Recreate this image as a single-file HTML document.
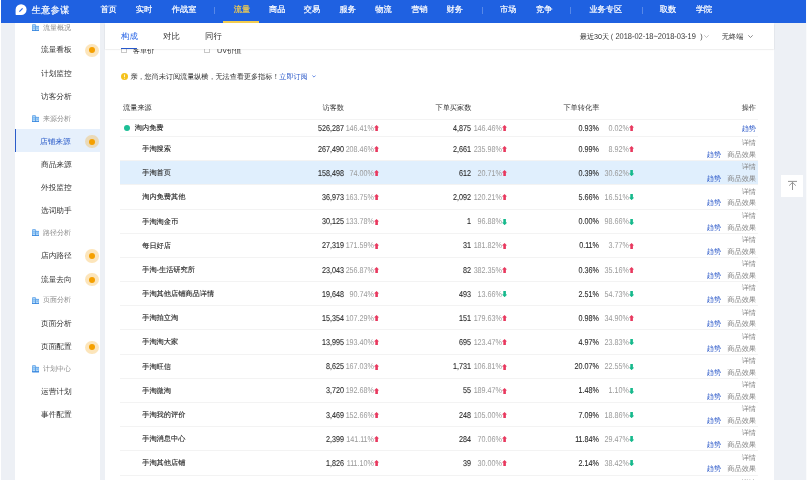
<!DOCTYPE html><html><head><meta charset="utf-8"><style>
*{box-sizing:border-box;margin:0;padding:0}
html,body{width:807px;height:480px;overflow:hidden}
body{position:relative;background:#edf0f5;font-family:"Liberation Sans",sans-serif;color:#333;text-rendering:geometricPrecision}
.abs{position:absolute;white-space:nowrap}
#wrap{position:absolute;left:0;top:0;width:807px;height:480px;will-change:transform}
#hdr{position:absolute;left:1px;top:0;width:804.8px;height:22.8px;background:#1f61e1;z-index:5}
#hdr .n{position:absolute;top:0;height:22.8px;line-height:20.6px;font-size:8.2px;color:#fff;white-space:nowrap;-webkit-text-stroke:0.2px #fff}
#hdr .n.on{color:#f3cd4e;-webkit-text-stroke:0.2px #f3cd4e}
#hdr .sep{position:absolute;top:7px;width:1px;height:7px;background:rgba(255,255,255,.25)}
#hdr .ul{position:absolute;left:222.1px;top:20.9px;width:36.3px;height:2px;background:#f3cd4e}
#logo{position:absolute;left:30.8px;top:0;line-height:20.2px;font-size:9px;letter-spacing:0.45px;color:#fff;-webkit-text-stroke:0.2px #fff}
#lstrip{position:absolute;left:0;top:0;width:1px;height:480px;background:#fff}
#side{position:absolute;left:14.6px;top:0;width:85.2px;height:480px;background:#fff}
#side .it{position:absolute;left:0;width:85.2px;height:23px;line-height:23px;font-size:8px;color:#333;padding-left:26.6px}
#side .it span{display:inline-block;position:relative;top:-0.6px;transform:scale(0.96);transform-origin:0 50%}
#side .sec{position:absolute;left:0;width:85.2px;height:20px;line-height:21px;font-size:7px;color:#8c8c8c;padding-left:28.3px}
#side .sec svg{position:absolute;left:17.1px;top:6.2px;width:7.4px;height:7.2px}
#side .act{background:#e6f0fc;color:#2b5cc9;border-left:1.6px solid #2b5cc9;padding-left:24.4px;margin-top:-0.8px}
#side .act span{top:0.2px}
.dot{position:absolute;width:13.4px;height:13.4px;border-radius:50%;background:rgba(245,170,30,.3)}
.dot:after{content:"";position:absolute;left:3.5px;top:3.5px;width:6.4px;height:6.4px;border-radius:50%;background:#f5a000}
#main{position:absolute;left:104.5px;top:0;width:669.5px;height:480px;background:#fff}
#tabs{position:absolute;left:104.5px;top:22.8px;width:669.5px;height:26.3px;background:#fff;z-index:3;box-shadow:0 0.5px 1.5px rgba(0,0,0,.16)}
.tab{position:absolute;top:0;line-height:27.5px;font-size:7.7px;color:#333}
.tb{font-size:8px}.tb span{display:inline-block;transform:scale(1.05);transform-origin:0 50%}
.t{position:absolute;font-size:7.2px;white-space:nowrap}
.nm{color:#2a2a2a;-webkit-text-stroke:0.12px #2a2a2a}
.nv{color:#2a2a2a;-webkit-text-stroke:0.08px #2a2a2a;transform:scaleY(1.18)}
.pc{transform:scaleY(1.18)}
.row{position:absolute;left:120px;width:638px;border-bottom:1px solid #f3f3f3}
.hl{background:#e0effd}
.ar{position:absolute;width:5.2px;height:6.2px}
.pc{color:#999}
.lk{color:#2856c8}
.gr{color:#858585}
</style></head><body>
<div id="wrap">
<div id="lstrip"></div>
<div id="hdr">
<svg class="abs" style="left:13.6px;top:3.8px" width="12" height="11.5" viewBox="0 0 12 11.5"><path d="M1.2 10.9 Q0.6 10.9 0.6 10.2 V5.6 A5.5 5.4 0 1 1 6.1 11 Z" fill="#fff"/><path d="M4.4 7.6 L7.6 4.3" stroke="#2462e6" stroke-width="1.1" fill="none"/></svg>
<div id="logo">生意参谋</div>
<div class="n" style="left:99.4px">首页</div>
<div class="n" style="left:134.8px">实时</div>
<div class="n" style="left:170.8px">作战室</div>
<div class="sep" style="left:213.0px"></div>
<div class="n on" style="left:232.7px">流量</div>
<div class="n" style="left:268.0px">商品</div>
<div class="n" style="left:302.8px">交易</div>
<div class="n" style="left:338.5px">服务</div>
<div class="n" style="left:374.2px">物流</div>
<div class="n" style="left:410.4px">营销</div>
<div class="n" style="left:445.5px">财务</div>
<div class="sep" style="left:481.2px"></div>
<div class="n" style="left:499.0px">市场</div>
<div class="n" style="left:535.1px">竞争</div>
<div class="sep" style="left:569.4px"></div>
<div class="n" style="left:588.4px">业务专区</div>
<div class="sep" style="left:640.5px"></div>
<div class="n" style="left:658.8px">取数</div>
<div class="n" style="left:694.9px">学院</div>
<div class="ul"></div>
</div>
<div id="side">
<div class="sec" style="top:18.10px"><svg viewBox="0 0 7.4 7.2"><path d="M0.4 7 V1.3 Q0.4 0.4 1.3 0.4 H2.7 Q3.6 0.4 3.6 1.3 V7 Z" fill="#b9dcf8" stroke="#4b97e6" stroke-width="0.8"/><path d="M3.6 7 V2.4 H7 V7 Z" fill="#b9dcf8" stroke="#4b97e6" stroke-width="0.8"/><rect x="0" y="6.3" width="7.4" height="0.9" fill="#2f80dc"/><rect x="1.3" y="1.8" width="1.4" height="1" fill="#5aa5ec"/><rect x="1.3" y="3.6" width="1.4" height="1" fill="#5aa5ec"/><rect x="4.6" y="3.6" width="1.4" height="1" fill="#5aa5ec"/></svg>流量概况</div>
<div class="it" style="top:38.70px"><span>流量看板</span></div>
<div class="dot" style="left:70.80px;top:43.50px"></div>
<div class="it" style="top:62.25px"><span>计划监控</span></div>
<div class="it" style="top:85.20px"><span>访客分析</span></div>
<div class="sec" style="top:108.75px"><svg viewBox="0 0 7.4 7.2"><path d="M0.4 7 V1.3 Q0.4 0.4 1.3 0.4 H2.7 Q3.6 0.4 3.6 1.3 V7 Z" fill="#b9dcf8" stroke="#4b97e6" stroke-width="0.8"/><path d="M3.6 7 V2.4 H7 V7 Z" fill="#b9dcf8" stroke="#4b97e6" stroke-width="0.8"/><rect x="0" y="6.3" width="7.4" height="0.9" fill="#2f80dc"/><rect x="1.3" y="1.8" width="1.4" height="1" fill="#5aa5ec"/><rect x="1.3" y="3.6" width="1.4" height="1" fill="#5aa5ec"/><rect x="4.6" y="3.6" width="1.4" height="1" fill="#5aa5ec"/></svg>来源分析</div>
<div class="it act" style="top:130.20px"><span>店铺来源</span></div>
<div class="dot" style="left:70.80px;top:135.00px"></div>
<div class="it" style="top:153.50px"><span>商品来源</span></div>
<div class="it" style="top:177.00px"><span>外投监控</span></div>
<div class="it" style="top:200.00px"><span>选词助手</span></div>
<div class="sec" style="top:222.90px"><svg viewBox="0 0 7.4 7.2"><path d="M0.4 7 V1.3 Q0.4 0.4 1.3 0.4 H2.7 Q3.6 0.4 3.6 1.3 V7 Z" fill="#b9dcf8" stroke="#4b97e6" stroke-width="0.8"/><path d="M3.6 7 V2.4 H7 V7 Z" fill="#b9dcf8" stroke="#4b97e6" stroke-width="0.8"/><rect x="0" y="6.3" width="7.4" height="0.9" fill="#2f80dc"/><rect x="1.3" y="1.8" width="1.4" height="1" fill="#5aa5ec"/><rect x="1.3" y="3.6" width="1.4" height="1" fill="#5aa5ec"/><rect x="4.6" y="3.6" width="1.4" height="1" fill="#5aa5ec"/></svg>路径分析</div>
<div class="it" style="top:244.50px"><span>店内路径</span></div>
<div class="dot" style="left:70.80px;top:249.30px"></div>
<div class="it" style="top:268.30px"><span>流量去向</span></div>
<div class="dot" style="left:70.80px;top:273.10px"></div>
<div class="sec" style="top:290.40px"><svg viewBox="0 0 7.4 7.2"><path d="M0.4 7 V1.3 Q0.4 0.4 1.3 0.4 H2.7 Q3.6 0.4 3.6 1.3 V7 Z" fill="#b9dcf8" stroke="#4b97e6" stroke-width="0.8"/><path d="M3.6 7 V2.4 H7 V7 Z" fill="#b9dcf8" stroke="#4b97e6" stroke-width="0.8"/><rect x="0" y="6.3" width="7.4" height="0.9" fill="#2f80dc"/><rect x="1.3" y="1.8" width="1.4" height="1" fill="#5aa5ec"/><rect x="1.3" y="3.6" width="1.4" height="1" fill="#5aa5ec"/><rect x="4.6" y="3.6" width="1.4" height="1" fill="#5aa5ec"/></svg>页面分析</div>
<div class="it" style="top:312.25px"><span>页面分析</span></div>
<div class="it" style="top:335.80px"><span>页面配置</span></div>
<div class="dot" style="left:70.80px;top:340.60px"></div>
<div class="sec" style="top:359.30px"><svg viewBox="0 0 7.4 7.2"><path d="M0.4 7 V1.3 Q0.4 0.4 1.3 0.4 H2.7 Q3.6 0.4 3.6 1.3 V7 Z" fill="#b9dcf8" stroke="#4b97e6" stroke-width="0.8"/><path d="M3.6 7 V2.4 H7 V7 Z" fill="#b9dcf8" stroke="#4b97e6" stroke-width="0.8"/><rect x="0" y="6.3" width="7.4" height="0.9" fill="#2f80dc"/><rect x="1.3" y="1.8" width="1.4" height="1" fill="#5aa5ec"/><rect x="1.3" y="3.6" width="1.4" height="1" fill="#5aa5ec"/><rect x="4.6" y="3.6" width="1.4" height="1" fill="#5aa5ec"/></svg>计划中心</div>
<div class="it" style="top:380.80px"><span>运营计划</span></div>
<div class="it" style="top:403.70px"><span>事件配置</span></div>
</div>
<div id="main"></div>
<div id="tabs">
<div class="tab tb" style="left:16.3px;color:#2462e6"><span>构成</span></div>
<div class="tab tb" style="left:58px"><span>对比</span></div>
<div class="tab tb" style="left:100.1px"><span>同行</span></div>
<div class="abs" style="left:16.6px;top:25.1px;width:15.8px;height:1.2px;background:#2758cc"></div>
<div class="tab" id="date" style="left:475.2px;font-size:7.2px">最近30天</div>
<div class="tab" style="left:506.3px;font-size:7.2px">(</div>
<div class="tab" id="dd" style="left:510.9px;font-size:7.45px"><span style="display:inline-block;transform:scaleY(1.12)">2018-02-18~2018-03-19</span></div>
<div class="tab" style="left:595.8px;font-size:7.2px">)</div>
<svg class="abs" style="left:599.8px;top:12.4px" width="5" height="3" viewBox="0 0 5 3"><path d="M0.3 0.3 L2.5 2.5 L4.7 0.3" stroke="#b5b5b5" stroke-width="0.85" fill="none"/></svg>
<div class="tab" style="left:617.3px;font-size:7.2px">无终端</div>
<svg class="abs" style="left:643.4px;top:12.4px" width="5" height="3" viewBox="0 0 5 3"><path d="M0.3 0.3 L2.5 2.5 L4.7 0.3" stroke="#777" stroke-width="0.85" fill="none"/></svg>
</div>
<div class="t" style="left:121px;top:47.2px;width:6.3px;height:6.3px;border:1px solid #c8c8c8;background:#fff"></div>
<div class="t" style="left:132.7px;top:46px;font-size:7.2px">客单价</div>
<div class="t" style="left:204px;top:47.2px;width:6.3px;height:6.3px;border:1px solid #c8c8c8;background:#fff"></div>
<div class="t" style="left:217px;top:46px;font-size:7.2px">UV价值</div>
<svg class="abs" style="left:120.8px;top:72.6px" width="7" height="7" viewBox="0 0 7 7"><circle cx="3.5" cy="3.5" r="3.5" fill="#f5c21b"/><path d="M3.5 1.5 V4.2 M3.5 4.9 V5.6" stroke="#fff" stroke-width="0.8"/></svg>
<div class="t" style="left:130.4px;top:70.5px;line-height:11px;font-size:7.2px;letter-spacing:-0.095px">亲，您尚未订阅流量纵横，无法查看更多指标！<span class="lk">立即订阅</span></div>
<svg class="abs" style="left:311.5px;top:75.3px" width="4" height="3" viewBox="0 0 4 3"><path d="M0.4 0.5 L2 2.1 L3.6 0.5" stroke="#2b5fd9" stroke-width="0.7" fill="none"/></svg>
<div class="row" style="top:95.5px;height:24px"></div>
<div class="t" style="left:123px;top:101.8px;line-height:11px">流量来源</div>
<div class="t" style="right:463.0px;top:101.8px;line-height:11px">访客数</div>
<div class="t" style="right:335.6px;top:101.8px;line-height:11px">下单买家数</div>
<div class="t" style="left:563.4px;top:101.8px;line-height:11px">下单转化率</div>
<div class="t" style="right:51.0px;top:101.8px;line-height:11px">操作</div>
<div class="row" style="top:119.50px;height:17.50px"></div>
<div class="abs" style="left:123.6px;top:124.75px;width:6.7px;height:6.7px;border-radius:50%;background:#1dbf96"></div>
<div class="t nm" style="left:134.8px;top:122.15px;line-height:11px">淘内免费</div>
<div class="t nv" style="right:463.0px;top:122.75px;line-height:11px">526,287</div>
<div class="t pc" style="right:433.0px;top:122.75px;line-height:11px">146.41%</div>
<svg class="ar" style="left:374.20px;top:125px" viewBox="0 0 5.2 6.2"><path d="M2.6 0 L5.2 2.6 H3.9 V6.2 H1.3 V2.6 H0 Z" fill="#e8385e"/></svg>
<div class="t nv" style="right:336.0px;top:122.75px;line-height:11px">4,875</div>
<div class="t pc" style="right:305.0px;top:122.75px;line-height:11px">146.46%</div>
<svg class="ar" style="left:502.20px;top:125px" viewBox="0 0 5.2 6.2"><path d="M2.6 0 L5.2 2.6 H3.9 V6.2 H1.3 V2.6 H0 Z" fill="#e8385e"/></svg>
<div class="t nv" style="right:208.0px;top:122.75px;line-height:11px">0.93%</div>
<div class="t pc" style="right:178.0px;top:122.75px;line-height:11px">0.02%</div>
<svg class="ar" style="left:629.20px;top:125px" viewBox="0 0 5.2 6.2"><path d="M2.6 0 L5.2 2.6 H3.9 V6.2 H1.3 V2.6 H0 Z" fill="#e8385e"/></svg>
<div class="t lk" style="right:51.0px;top:122.75px;line-height:11px">趋势</div>
<div class="row" style="top:137.00px;height:24.20px"></div>
<div class="t nm" style="left:142.2px;top:143.00px;line-height:11px">手淘搜索</div>
<div class="t nv" style="right:463.0px;top:143.60px;line-height:11px">267,490</div>
<div class="t pc" style="right:433.0px;top:143.60px;line-height:11px">208.46%</div>
<svg class="ar" style="left:374.20px;top:146px" viewBox="0 0 5.2 6.2"><path d="M2.6 0 L5.2 2.6 H3.9 V6.2 H1.3 V2.6 H0 Z" fill="#e8385e"/></svg>
<div class="t nv" style="right:336.0px;top:143.60px;line-height:11px">2,661</div>
<div class="t pc" style="right:305.0px;top:143.60px;line-height:11px">235.98%</div>
<svg class="ar" style="left:502.20px;top:146px" viewBox="0 0 5.2 6.2"><path d="M2.6 0 L5.2 2.6 H3.9 V6.2 H1.3 V2.6 H0 Z" fill="#e8385e"/></svg>
<div class="t nv" style="right:208.0px;top:143.60px;line-height:11px">0.99%</div>
<div class="t pc" style="right:178.0px;top:143.60px;line-height:11px">8.92%</div>
<svg class="ar" style="left:629.20px;top:146px" viewBox="0 0 5.2 6.2"><path d="M2.6 0 L5.2 2.6 H3.9 V6.2 H1.3 V2.6 H0 Z" fill="#e8385e"/></svg>
<div class="t gr" style="right:51.0px;top:137.30px;line-height:11px">详情</div>
<div class="t" style="right:51.0px;top:149.10px;line-height:11px"><span class="lk">趋势</span><span class="gr" style="margin-left:6.2px">商品效果</span></div>
<div class="row hl" style="top:161.20px;height:24.18px"></div>
<div class="t nm" style="left:142.2px;top:167.19px;line-height:11px">手淘首页</div>
<div class="t nv" style="right:463.0px;top:167.79px;line-height:11px">158,498</div>
<div class="t pc" style="right:433.0px;top:167.79px;line-height:11px">74.00%</div>
<svg class="ar" style="left:374.20px;top:170px" viewBox="0 0 5.2 6.2"><path d="M2.6 0 L5.2 2.6 H3.9 V6.2 H1.3 V2.6 H0 Z" fill="#e8385e"/></svg>
<div class="t nv" style="right:336.0px;top:167.79px;line-height:11px">612</div>
<div class="t pc" style="right:305.0px;top:167.79px;line-height:11px">20.71%</div>
<svg class="ar" style="left:502.20px;top:170px" viewBox="0 0 5.2 6.2"><path d="M2.6 0 L5.2 2.6 H3.9 V6.2 H1.3 V2.6 H0 Z" fill="#e8385e"/></svg>
<div class="t nv" style="right:208.0px;top:167.79px;line-height:11px">0.39%</div>
<div class="t pc" style="right:178.0px;top:167.79px;line-height:11px">30.62%</div>
<svg class="ar" style="left:629.20px;top:170px" viewBox="0 0 5.2 6.2"><path d="M2.6 6.2 L5.2 3.6 H3.9 V0 H1.3 V3.6 H0 Z" fill="#16b98c"/></svg>
<div class="t gr" style="right:51.0px;top:161.49px;line-height:11px">详情</div>
<div class="t" style="right:51.0px;top:173.29px;line-height:11px"><span class="lk">趋势</span><span class="gr" style="margin-left:6.2px">商品效果</span></div>
<div class="row" style="top:185.38px;height:24.18px"></div>
<div class="t nm" style="left:142.2px;top:191.37px;line-height:11px">淘内免费其他</div>
<div class="t nv" style="right:463.0px;top:191.97px;line-height:11px">36,973</div>
<div class="t pc" style="right:433.0px;top:191.97px;line-height:11px">163.75%</div>
<svg class="ar" style="left:374.20px;top:194px" viewBox="0 0 5.2 6.2"><path d="M2.6 0 L5.2 2.6 H3.9 V6.2 H1.3 V2.6 H0 Z" fill="#e8385e"/></svg>
<div class="t nv" style="right:336.0px;top:191.97px;line-height:11px">2,092</div>
<div class="t pc" style="right:305.0px;top:191.97px;line-height:11px">120.21%</div>
<svg class="ar" style="left:502.20px;top:194px" viewBox="0 0 5.2 6.2"><path d="M2.6 0 L5.2 2.6 H3.9 V6.2 H1.3 V2.6 H0 Z" fill="#e8385e"/></svg>
<div class="t nv" style="right:208.0px;top:191.97px;line-height:11px">5.66%</div>
<div class="t pc" style="right:178.0px;top:191.97px;line-height:11px">16.51%</div>
<svg class="ar" style="left:629.20px;top:194px" viewBox="0 0 5.2 6.2"><path d="M2.6 6.2 L5.2 3.6 H3.9 V0 H1.3 V3.6 H0 Z" fill="#16b98c"/></svg>
<div class="t gr" style="right:51.0px;top:185.67px;line-height:11px">详情</div>
<div class="t" style="right:51.0px;top:197.47px;line-height:11px"><span class="lk">趋势</span><span class="gr" style="margin-left:6.2px">商品效果</span></div>
<div class="row" style="top:209.56px;height:24.18px"></div>
<div class="t nm" style="left:142.2px;top:215.55px;line-height:11px">手淘淘金币</div>
<div class="t nv" style="right:463.0px;top:216.15px;line-height:11px">30,125</div>
<div class="t pc" style="right:433.0px;top:216.15px;line-height:11px">133.78%</div>
<svg class="ar" style="left:374.20px;top:219px" viewBox="0 0 5.2 6.2"><path d="M2.6 0 L5.2 2.6 H3.9 V6.2 H1.3 V2.6 H0 Z" fill="#e8385e"/></svg>
<div class="t nv" style="right:336.0px;top:216.15px;line-height:11px">1</div>
<div class="t pc" style="right:305.0px;top:216.15px;line-height:11px">96.88%</div>
<svg class="ar" style="left:502.20px;top:219px" viewBox="0 0 5.2 6.2"><path d="M2.6 6.2 L5.2 3.6 H3.9 V0 H1.3 V3.6 H0 Z" fill="#16b98c"/></svg>
<div class="t nv" style="right:208.0px;top:216.15px;line-height:11px">0.00%</div>
<div class="t pc" style="right:178.0px;top:216.15px;line-height:11px">98.66%</div>
<svg class="ar" style="left:629.20px;top:219px" viewBox="0 0 5.2 6.2"><path d="M2.6 6.2 L5.2 3.6 H3.9 V0 H1.3 V3.6 H0 Z" fill="#16b98c"/></svg>
<div class="t gr" style="right:51.0px;top:209.85px;line-height:11px">详情</div>
<div class="t" style="right:51.0px;top:221.65px;line-height:11px"><span class="lk">趋势</span><span class="gr" style="margin-left:6.2px">商品效果</span></div>
<div class="row" style="top:233.74px;height:24.18px"></div>
<div class="t nm" style="left:142.2px;top:239.73px;line-height:11px">每日好店</div>
<div class="t nv" style="right:463.0px;top:240.33px;line-height:11px">27,319</div>
<div class="t pc" style="right:433.0px;top:240.33px;line-height:11px">171.59%</div>
<svg class="ar" style="left:374.20px;top:243px" viewBox="0 0 5.2 6.2"><path d="M2.6 0 L5.2 2.6 H3.9 V6.2 H1.3 V2.6 H0 Z" fill="#e8385e"/></svg>
<div class="t nv" style="right:336.0px;top:240.33px;line-height:11px">31</div>
<div class="t pc" style="right:305.0px;top:240.33px;line-height:11px">181.82%</div>
<svg class="ar" style="left:502.20px;top:243px" viewBox="0 0 5.2 6.2"><path d="M2.6 0 L5.2 2.6 H3.9 V6.2 H1.3 V2.6 H0 Z" fill="#e8385e"/></svg>
<div class="t nv" style="right:208.0px;top:240.33px;line-height:11px">0.11%</div>
<div class="t pc" style="right:178.0px;top:240.33px;line-height:11px">3.77%</div>
<svg class="ar" style="left:629.20px;top:243px" viewBox="0 0 5.2 6.2"><path d="M2.6 0 L5.2 2.6 H3.9 V6.2 H1.3 V2.6 H0 Z" fill="#e8385e"/></svg>
<div class="t gr" style="right:51.0px;top:234.03px;line-height:11px">详情</div>
<div class="t" style="right:51.0px;top:245.83px;line-height:11px"><span class="lk">趋势</span><span class="gr" style="margin-left:6.2px">商品效果</span></div>
<div class="row" style="top:257.92px;height:24.18px"></div>
<div class="t nm" style="left:142.2px;top:263.91px;line-height:11px">手淘-生活研究所</div>
<div class="t nv" style="right:463.0px;top:264.51px;line-height:11px">23,043</div>
<div class="t pc" style="right:433.0px;top:264.51px;line-height:11px">256.87%</div>
<svg class="ar" style="left:374.20px;top:267px" viewBox="0 0 5.2 6.2"><path d="M2.6 0 L5.2 2.6 H3.9 V6.2 H1.3 V2.6 H0 Z" fill="#e8385e"/></svg>
<div class="t nv" style="right:336.0px;top:264.51px;line-height:11px">82</div>
<div class="t pc" style="right:305.0px;top:264.51px;line-height:11px">382.35%</div>
<svg class="ar" style="left:502.20px;top:267px" viewBox="0 0 5.2 6.2"><path d="M2.6 0 L5.2 2.6 H3.9 V6.2 H1.3 V2.6 H0 Z" fill="#e8385e"/></svg>
<div class="t nv" style="right:208.0px;top:264.51px;line-height:11px">0.36%</div>
<div class="t pc" style="right:178.0px;top:264.51px;line-height:11px">35.16%</div>
<svg class="ar" style="left:629.20px;top:267px" viewBox="0 0 5.2 6.2"><path d="M2.6 0 L5.2 2.6 H3.9 V6.2 H1.3 V2.6 H0 Z" fill="#e8385e"/></svg>
<div class="t gr" style="right:51.0px;top:258.21px;line-height:11px">详情</div>
<div class="t" style="right:51.0px;top:270.01px;line-height:11px"><span class="lk">趋势</span><span class="gr" style="margin-left:6.2px">商品效果</span></div>
<div class="row" style="top:282.10px;height:24.18px"></div>
<div class="t nm" style="left:142.2px;top:288.09px;line-height:11px">手淘其他店铺商品详情</div>
<div class="t nv" style="right:463.0px;top:288.69px;line-height:11px">19,648</div>
<div class="t pc" style="right:433.0px;top:288.69px;line-height:11px">90.74%</div>
<svg class="ar" style="left:374.20px;top:291px" viewBox="0 0 5.2 6.2"><path d="M2.6 0 L5.2 2.6 H3.9 V6.2 H1.3 V2.6 H0 Z" fill="#e8385e"/></svg>
<div class="t nv" style="right:336.0px;top:288.69px;line-height:11px">493</div>
<div class="t pc" style="right:305.0px;top:288.69px;line-height:11px">13.66%</div>
<svg class="ar" style="left:502.20px;top:291px" viewBox="0 0 5.2 6.2"><path d="M2.6 6.2 L5.2 3.6 H3.9 V0 H1.3 V3.6 H0 Z" fill="#16b98c"/></svg>
<div class="t nv" style="right:208.0px;top:288.69px;line-height:11px">2.51%</div>
<div class="t pc" style="right:178.0px;top:288.69px;line-height:11px">54.73%</div>
<svg class="ar" style="left:629.20px;top:291px" viewBox="0 0 5.2 6.2"><path d="M2.6 6.2 L5.2 3.6 H3.9 V0 H1.3 V3.6 H0 Z" fill="#16b98c"/></svg>
<div class="t gr" style="right:51.0px;top:282.39px;line-height:11px">详情</div>
<div class="t" style="right:51.0px;top:294.19px;line-height:11px"><span class="lk">趋势</span><span class="gr" style="margin-left:6.2px">商品效果</span></div>
<div class="row" style="top:306.28px;height:24.18px"></div>
<div class="t nm" style="left:142.2px;top:312.27px;line-height:11px">手淘拍立淘</div>
<div class="t nv" style="right:463.0px;top:312.87px;line-height:11px">15,354</div>
<div class="t pc" style="right:433.0px;top:312.87px;line-height:11px">107.29%</div>
<svg class="ar" style="left:374.20px;top:315px" viewBox="0 0 5.2 6.2"><path d="M2.6 0 L5.2 2.6 H3.9 V6.2 H1.3 V2.6 H0 Z" fill="#e8385e"/></svg>
<div class="t nv" style="right:336.0px;top:312.87px;line-height:11px">151</div>
<div class="t pc" style="right:305.0px;top:312.87px;line-height:11px">179.63%</div>
<svg class="ar" style="left:502.20px;top:315px" viewBox="0 0 5.2 6.2"><path d="M2.6 0 L5.2 2.6 H3.9 V6.2 H1.3 V2.6 H0 Z" fill="#e8385e"/></svg>
<div class="t nv" style="right:208.0px;top:312.87px;line-height:11px">0.98%</div>
<div class="t pc" style="right:178.0px;top:312.87px;line-height:11px">34.90%</div>
<svg class="ar" style="left:629.20px;top:315px" viewBox="0 0 5.2 6.2"><path d="M2.6 0 L5.2 2.6 H3.9 V6.2 H1.3 V2.6 H0 Z" fill="#e8385e"/></svg>
<div class="t gr" style="right:51.0px;top:306.57px;line-height:11px">详情</div>
<div class="t" style="right:51.0px;top:318.37px;line-height:11px"><span class="lk">趋势</span><span class="gr" style="margin-left:6.2px">商品效果</span></div>
<div class="row" style="top:330.46px;height:24.18px"></div>
<div class="t nm" style="left:142.2px;top:336.45px;line-height:11px">手淘淘大家</div>
<div class="t nv" style="right:463.0px;top:337.05px;line-height:11px">13,995</div>
<div class="t pc" style="right:433.0px;top:337.05px;line-height:11px">193.40%</div>
<svg class="ar" style="left:374.20px;top:339px" viewBox="0 0 5.2 6.2"><path d="M2.6 0 L5.2 2.6 H3.9 V6.2 H1.3 V2.6 H0 Z" fill="#e8385e"/></svg>
<div class="t nv" style="right:336.0px;top:337.05px;line-height:11px">695</div>
<div class="t pc" style="right:305.0px;top:337.05px;line-height:11px">123.47%</div>
<svg class="ar" style="left:502.20px;top:339px" viewBox="0 0 5.2 6.2"><path d="M2.6 0 L5.2 2.6 H3.9 V6.2 H1.3 V2.6 H0 Z" fill="#e8385e"/></svg>
<div class="t nv" style="right:208.0px;top:337.05px;line-height:11px">4.97%</div>
<div class="t pc" style="right:178.0px;top:337.05px;line-height:11px">23.83%</div>
<svg class="ar" style="left:629.20px;top:339px" viewBox="0 0 5.2 6.2"><path d="M2.6 6.2 L5.2 3.6 H3.9 V0 H1.3 V3.6 H0 Z" fill="#16b98c"/></svg>
<div class="t gr" style="right:51.0px;top:330.75px;line-height:11px">详情</div>
<div class="t" style="right:51.0px;top:342.55px;line-height:11px"><span class="lk">趋势</span><span class="gr" style="margin-left:6.2px">商品效果</span></div>
<div class="row" style="top:354.64px;height:24.18px"></div>
<div class="t nm" style="left:142.2px;top:360.63px;line-height:11px">手淘旺信</div>
<div class="t nv" style="right:463.0px;top:361.23px;line-height:11px">8,625</div>
<div class="t pc" style="right:433.0px;top:361.23px;line-height:11px">167.03%</div>
<svg class="ar" style="left:374.20px;top:364px" viewBox="0 0 5.2 6.2"><path d="M2.6 0 L5.2 2.6 H3.9 V6.2 H1.3 V2.6 H0 Z" fill="#e8385e"/></svg>
<div class="t nv" style="right:336.0px;top:361.23px;line-height:11px">1,731</div>
<div class="t pc" style="right:305.0px;top:361.23px;line-height:11px">106.81%</div>
<svg class="ar" style="left:502.20px;top:364px" viewBox="0 0 5.2 6.2"><path d="M2.6 0 L5.2 2.6 H3.9 V6.2 H1.3 V2.6 H0 Z" fill="#e8385e"/></svg>
<div class="t nv" style="right:208.0px;top:361.23px;line-height:11px">20.07%</div>
<div class="t pc" style="right:178.0px;top:361.23px;line-height:11px">22.55%</div>
<svg class="ar" style="left:629.20px;top:364px" viewBox="0 0 5.2 6.2"><path d="M2.6 6.2 L5.2 3.6 H3.9 V0 H1.3 V3.6 H0 Z" fill="#16b98c"/></svg>
<div class="t gr" style="right:51.0px;top:354.93px;line-height:11px">详情</div>
<div class="t" style="right:51.0px;top:366.73px;line-height:11px"><span class="lk">趋势</span><span class="gr" style="margin-left:6.2px">商品效果</span></div>
<div class="row" style="top:378.82px;height:24.18px"></div>
<div class="t nm" style="left:142.2px;top:384.81px;line-height:11px">手淘微淘</div>
<div class="t nv" style="right:463.0px;top:385.41px;line-height:11px">3,720</div>
<div class="t pc" style="right:433.0px;top:385.41px;line-height:11px">192.68%</div>
<svg class="ar" style="left:374.20px;top:388px" viewBox="0 0 5.2 6.2"><path d="M2.6 0 L5.2 2.6 H3.9 V6.2 H1.3 V2.6 H0 Z" fill="#e8385e"/></svg>
<div class="t nv" style="right:336.0px;top:385.41px;line-height:11px">55</div>
<div class="t pc" style="right:305.0px;top:385.41px;line-height:11px">189.47%</div>
<svg class="ar" style="left:502.20px;top:388px" viewBox="0 0 5.2 6.2"><path d="M2.6 0 L5.2 2.6 H3.9 V6.2 H1.3 V2.6 H0 Z" fill="#e8385e"/></svg>
<div class="t nv" style="right:208.0px;top:385.41px;line-height:11px">1.48%</div>
<div class="t pc" style="right:178.0px;top:385.41px;line-height:11px">1.10%</div>
<svg class="ar" style="left:629.20px;top:388px" viewBox="0 0 5.2 6.2"><path d="M2.6 6.2 L5.2 3.6 H3.9 V0 H1.3 V3.6 H0 Z" fill="#16b98c"/></svg>
<div class="t gr" style="right:51.0px;top:379.11px;line-height:11px">详情</div>
<div class="t" style="right:51.0px;top:390.91px;line-height:11px"><span class="lk">趋势</span><span class="gr" style="margin-left:6.2px">商品效果</span></div>
<div class="row" style="top:403.00px;height:24.18px"></div>
<div class="t nm" style="left:142.2px;top:408.99px;line-height:11px">手淘我的评价</div>
<div class="t nv" style="right:463.0px;top:409.59px;line-height:11px">3,469</div>
<div class="t pc" style="right:433.0px;top:409.59px;line-height:11px">152.66%</div>
<svg class="ar" style="left:374.20px;top:412px" viewBox="0 0 5.2 6.2"><path d="M2.6 0 L5.2 2.6 H3.9 V6.2 H1.3 V2.6 H0 Z" fill="#e8385e"/></svg>
<div class="t nv" style="right:336.0px;top:409.59px;line-height:11px">248</div>
<div class="t pc" style="right:305.0px;top:409.59px;line-height:11px">105.00%</div>
<svg class="ar" style="left:502.20px;top:412px" viewBox="0 0 5.2 6.2"><path d="M2.6 0 L5.2 2.6 H3.9 V6.2 H1.3 V2.6 H0 Z" fill="#e8385e"/></svg>
<div class="t nv" style="right:208.0px;top:409.59px;line-height:11px">7.09%</div>
<div class="t pc" style="right:178.0px;top:409.59px;line-height:11px">18.86%</div>
<svg class="ar" style="left:629.20px;top:412px" viewBox="0 0 5.2 6.2"><path d="M2.6 6.2 L5.2 3.6 H3.9 V0 H1.3 V3.6 H0 Z" fill="#16b98c"/></svg>
<div class="t gr" style="right:51.0px;top:403.29px;line-height:11px">详情</div>
<div class="t" style="right:51.0px;top:415.09px;line-height:11px"><span class="lk">趋势</span><span class="gr" style="margin-left:6.2px">商品效果</span></div>
<div class="row" style="top:427.18px;height:24.18px"></div>
<div class="t nm" style="left:142.2px;top:433.17px;line-height:11px">手淘消息中心</div>
<div class="t nv" style="right:463.0px;top:433.77px;line-height:11px">2,399</div>
<div class="t pc" style="right:433.0px;top:433.77px;line-height:11px">141.11%</div>
<svg class="ar" style="left:374.20px;top:436px" viewBox="0 0 5.2 6.2"><path d="M2.6 0 L5.2 2.6 H3.9 V6.2 H1.3 V2.6 H0 Z" fill="#e8385e"/></svg>
<div class="t nv" style="right:336.0px;top:433.77px;line-height:11px">284</div>
<div class="t pc" style="right:305.0px;top:433.77px;line-height:11px">70.06%</div>
<svg class="ar" style="left:502.20px;top:436px" viewBox="0 0 5.2 6.2"><path d="M2.6 0 L5.2 2.6 H3.9 V6.2 H1.3 V2.6 H0 Z" fill="#e8385e"/></svg>
<div class="t nv" style="right:208.0px;top:433.77px;line-height:11px">11.84%</div>
<div class="t pc" style="right:178.0px;top:433.77px;line-height:11px">29.47%</div>
<svg class="ar" style="left:629.20px;top:436px" viewBox="0 0 5.2 6.2"><path d="M2.6 6.2 L5.2 3.6 H3.9 V0 H1.3 V3.6 H0 Z" fill="#16b98c"/></svg>
<div class="t gr" style="right:51.0px;top:427.47px;line-height:11px">详情</div>
<div class="t" style="right:51.0px;top:439.27px;line-height:11px"><span class="lk">趋势</span><span class="gr" style="margin-left:6.2px">商品效果</span></div>
<div class="row" style="top:451.36px;height:24.18px"></div>
<div class="t nm" style="left:142.2px;top:457.35px;line-height:11px">手淘其他店铺</div>
<div class="t nv" style="right:463.0px;top:457.95px;line-height:11px">1,826</div>
<div class="t pc" style="right:433.0px;top:457.95px;line-height:11px">111.10%</div>
<svg class="ar" style="left:374.20px;top:460px" viewBox="0 0 5.2 6.2"><path d="M2.6 0 L5.2 2.6 H3.9 V6.2 H1.3 V2.6 H0 Z" fill="#e8385e"/></svg>
<div class="t nv" style="right:336.0px;top:457.95px;line-height:11px">39</div>
<div class="t pc" style="right:305.0px;top:457.95px;line-height:11px">30.00%</div>
<svg class="ar" style="left:502.20px;top:460px" viewBox="0 0 5.2 6.2"><path d="M2.6 0 L5.2 2.6 H3.9 V6.2 H1.3 V2.6 H0 Z" fill="#e8385e"/></svg>
<div class="t nv" style="right:208.0px;top:457.95px;line-height:11px">2.14%</div>
<div class="t pc" style="right:178.0px;top:457.95px;line-height:11px">38.42%</div>
<svg class="ar" style="left:629.20px;top:460px" viewBox="0 0 5.2 6.2"><path d="M2.6 6.2 L5.2 3.6 H3.9 V0 H1.3 V3.6 H0 Z" fill="#16b98c"/></svg>
<div class="t gr" style="right:51.0px;top:451.65px;line-height:11px">详情</div>
<div class="t" style="right:51.0px;top:463.45px;line-height:11px"><span class="lk">趋势</span><span class="gr" style="margin-left:6.2px">商品效果</span></div>
<div class="t gr" style="right:51.0px;top:476.54px;line-height:11px">详情</div>
<div class="abs" style="left:781.4px;top:175.1px;width:21.8px;height:21.9px;background:#fff"></div>
<svg class="abs" style="left:787px;top:180px" width="11" height="11" viewBox="0 0 11 11"><path d="M1 1.4 H10 M5.5 2.4 V10 M2.2 5.6 L5.5 2.4 L8.8 5.6" stroke="#808080" stroke-width="0.85" fill="none"/></svg>
<div class="abs" style="left:805.8px;top:0;width:1.2px;height:480px;background:#fafbfc;z-index:6"></div>
</div>
</body></html>
